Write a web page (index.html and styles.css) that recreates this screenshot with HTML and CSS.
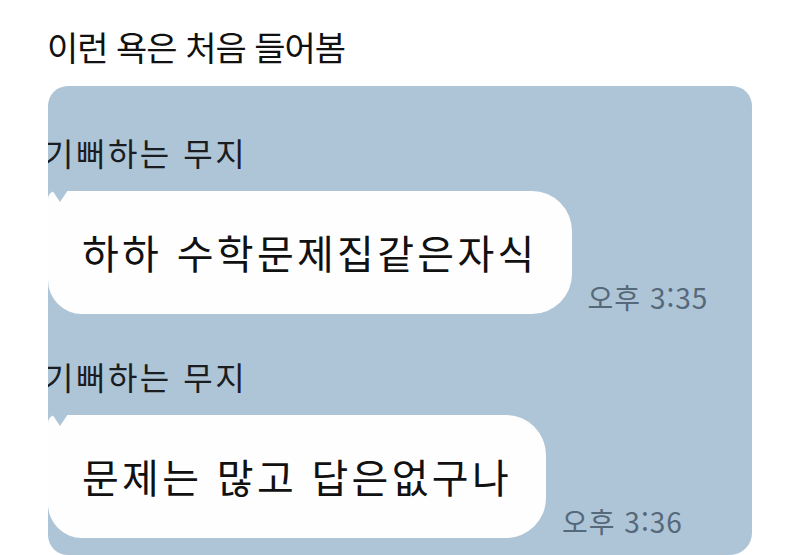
FILE: index.html
```html
<!DOCTYPE html>
<html lang="ko">
<head>
<meta charset="utf-8">
<link rel="stylesheet" href="styles.css">
</head>
<body>
<div class="page">
  <h1 class="title">이런 욕은 처음 들어봄</h1>
  <div class="panel">
    <div class="name">기뻐하는 무지</div>
    <div class="msg">
      <div class="bubble">하하 수학문제집같은자식<span class="notch"></span></div>
      <div class="time">오후 3:35</div>
    </div>
    <div class="name second">기뻐하는 무지</div>
    <div class="msg">
      <div class="bubble">문제는 많고 답은없구나<span class="notch"></span></div>
      <div class="time">오후 3:36</div>
    </div>
  </div>
</div>
</body>
</html>
```
FILE: styles.css
```css
* { box-sizing: border-box; }
html, body { margin: 0; padding: 0; }
body {
  width: 800px;
  height: 555px;
  overflow: hidden;
  background: #ffffff;
  font-family: "Noto Sans CJK KR", "Noto Sans", sans-serif;
}
.page {
  padding-top: 25px;
}
.title {
  margin: 0 0 0 47px;
  font-size: 34px;
  line-height: 44px;
  letter-spacing: -1px;
  font-weight: 400;
  color: #111111;
  height: 61px;
}
.panel {
  margin-left: 48px;
  width: 704px;
  height: 469px;
  background: #aec5d7;
  border-radius: 20px 20px 22px 20px;
  overflow: hidden;
  padding-top: 46px;
}
.name {
  margin-left: -4px;
  font-size: 32px;
  line-height: 40px;
  letter-spacing: 2.5px;
  color: #1a1d21;
}
.name.second {
  margin-top: 42px;
}
.msg {
  display: flex;
  align-items: flex-end;
  gap: 16px;
  margin-top: 19px;
}
.bubble {
  position: relative;
  background: #fefefe;
  border-radius: 8px 40px 40px 34px;
  padding: 37px 34px 38px 34px;
  font-size: 40px;
  line-height: 48px;
  letter-spacing: 3.3px;
  color: #111111;
}
.notch {
  position: absolute;
  left: 4px;
  top: -1px;
  width: 16px;
  height: 12px;
  background: #aec5d7;
  clip-path: polygon(0 0, 100% 0, 50% 100%);
}
.time {
  font-size: 28px;
  line-height: 32px;
  letter-spacing: 1px;
  color: #56697a;
  margin-bottom: 1px;
}
```
